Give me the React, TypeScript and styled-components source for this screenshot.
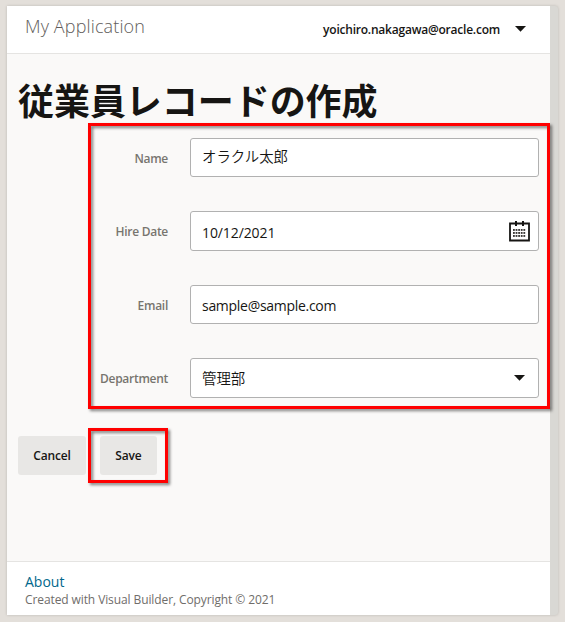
import React from "react";
import styled, { createGlobalStyle } from "styled-components";

const GlobalStyle = createGlobalStyle`
  *, *::before, *::after { box-sizing: border-box; }
  body {
    margin: 0;
    background: #e3dfda;
    color: #161513;
    font-family: "Open Sans", "Noto Sans CJK JP", sans-serif;
  }
`;

const Stage = styled.div`
  display: flex;
  width: 565px;
  height: 622px;
  padding: 6px 7px 7px;
  overflow: hidden;
`;

const Device = styled.div`
  display: flex;
  width: 551px;
  height: 609px;
  padding-right: 8px;
  background: #d9d8d4;
  border-radius: 0 3px 3px 0;
  box-shadow: 0 0 3px rgba(0, 0, 0, 0.18);
`;

const Page = styled.div`
  position: relative;
  display: flex;
  flex-direction: column;
  width: 543px;
  background: #faf9f8;
`;

const Header = styled.header`
  display: flex;
  justify-content: space-between;
  height: 48px;
  padding: 0 24px 0 18px;
  background: #fff;
  border-bottom: 1px solid #e5e4e2;
`;

const Line = styled.span<{ $size: number; $spacing?: number; $weight?: number }>`
  display: block;
  white-space: nowrap;
  font-size: ${(p) => p.$size}px;
  font-weight: ${(p) => p.$weight ?? 400};
  letter-spacing: ${(p) => p.$spacing ?? 0}px;
`;

const AppName = styled(Line)`
  color: #5f5d5a;
  line-height: 41px;
`;

const Account = styled.div`
  display: flex;
  align-items: center;
  gap: 15px;
  height: 46px;
`;

const Title = styled.h1`
  margin: 21px 0 0 11px;
  height: 48px;
  font: 700 36px/48px "Noto Sans CJK JP", sans-serif;
  letter-spacing: -0.05px;
  white-space: nowrap;
`;

const Form = styled.form`
  display: flex;
  flex-direction: column;
  gap: 34px;
  padding: 15px 11px 0 0;
`;

const Row = styled.div<{ $height: number }>`
  display: grid;
  grid-template-columns: 161px 349px;
  grid-template-rows: 100%;
  column-gap: 22px;
  height: ${(p) => p.$height}px;
`;

const Label = styled(Line)`
  text-align: right;
  line-height: 41px;
  color: #77756f;
`;

const Field = styled.div`
  display: flex;
  align-items: center;
  justify-content: space-between;
  padding: 0 8px 0 11px;
  background: #fff;
  border: 1px solid #b1b1b1;
  border-radius: 3px;
`;

const Value = styled(Line)<{ $shift?: number }>`
  line-height: 20px;
  margin-top: ${(p) => p.$shift ?? 0}px;
`;

const JapaneseValue = styled(Value)`
  font-family: "Noto Sans CJK JP", sans-serif;
`;

const Actions = styled.div`
  display: flex;
  gap: 14px;
  padding: 38px 0 0 11px;
`;

const Button = styled.button<{ $width: number }>`
  display: flex;
  align-items: center;
  justify-content: center;
  width: ${(p) => p.$width}px;
  height: 39px;
  padding: 0;
  border: 0;
  border-radius: 3px;
  background: #e8e7e5;
  color: #161513;
  font-family: inherit;
`;

const Footer = styled.footer`
  margin-top: auto;
  height: 54px;
  padding: 10px 18px 0;
  background: #fff;
  border-top: 1px solid #e5e4e2;
`;

const About = styled(Line)`
  color: #00688c;
  line-height: 20px;
`;

const Copyright = styled(Line)`
  color: #6f6d6a;
  line-height: 16px;
`;

const Highlight = styled.div<{ $top: number; $width: number; $height: number }>`
  position: absolute;
  left: 81px;
  top: ${(p) => p.$top}px;
  width: ${(p) => p.$width}px;
  height: ${(p) => p.$height}px;
  border: 3px solid #f00;
  filter: drop-shadow(2px 2px 1.5px rgba(0, 0, 0, 0.5));
  pointer-events: none;
`;

const CaretSlot = styled.span`
  display: flex;
  margin: 0 5px 1px 0;
`;

const Caret = () => (
  <svg width="11" height="6" viewBox="0 0 11 6">
    <path d="M0 0H11L5.5 5.7Z" fill="#161513" />
  </svg>
);

const dotColumns = [4, 6.6, 9.2, 11.8, 14.4];
const dotRows = [8, 11, 14];

const CalendarIcon = () => (
  <svg width="21" height="21" viewBox="0 0 21 21">
    <path d="M1 2.5H20V19.5H1Z" fill="none" stroke="#161513" strokeWidth="1.8" />
    <path d="M7 0V5M14 0V5" stroke="#161513" strokeWidth="2" />
    {dotRows.map((y) =>
      dotColumns.map((x) => (
        <rect key={`${x}-${y}`} x={x} y={y} width="1.8" height="1.9" fill="#3c3a38" />
      ))
    )}
  </svg>
);

export default function App() {
  return (
    <>
      <GlobalStyle />
      <Stage>
        <Device>
          <Page>
            <Header>
              <AppName $size={18} $weight={300} $spacing={0.13}>My Application</AppName>
              <Account>
                <Line $size={12} $weight={600} $spacing={-0.22}>yoichiro.nakagawa@oracle.com</Line>
                <Caret />
              </Account>
            </Header>
            <Title>従業員レコードの作成</Title>
            <Form>
              <Row $height={39}>
                <Label $size={12} $weight={600} $spacing={-0.28}>Name</Label>
                <Field><JapaneseValue $size={14.4} $weight={350} $shift={-3}>オラクル太郎</JapaneseValue></Field>
              </Row>
              <Row $height={40}>
                <Label $size={12} $weight={600} $spacing={-0.28}>Hire Date</Label>
                <Field>
                  <Value $size={14} $shift={3} $spacing={-0.1}>10/12/2021</Value>
                  <CalendarIcon />
                </Field>
              </Row>
              <Row $height={39}>
                <Label $size={12} $weight={600} $spacing={-0.28}>Email</Label>
                <Field><Value $size={14} $shift={3} $spacing={-0.29}>sample@sample.com</Value></Field>
              </Row>
              <Row $height={40}>
                <Label $size={12} $weight={600} $spacing={-0.28}>Department</Label>
                <Field>
                  <JapaneseValue $size={14.4} $weight={350} $shift={-1}>管理部</JapaneseValue>
                  <CaretSlot><Caret /></CaretSlot>
                </Field>
              </Row>
            </Form>
            <Actions>
              <Button type="button" $width={68}><Line $size={12} $weight={600} $spacing={-0.15}>Cancel</Line></Button>
              <Button type="button" $width={57}><Line $size={12} $weight={600} $spacing={-0.15}>Save</Line></Button>
            </Actions>
            <Footer>
              <About $size={14}>About</About>
              <Copyright $size={12} $spacing={-0.1}>Created with Visual Builder, Copyright © 2021</Copyright>
            </Footer>
            <Highlight $top={117} $width={462} $height={286} />
            <Highlight $top={422} $width={80} $height={55} />
          </Page>
        </Device>
      </Stage>
    </>
  );
}
